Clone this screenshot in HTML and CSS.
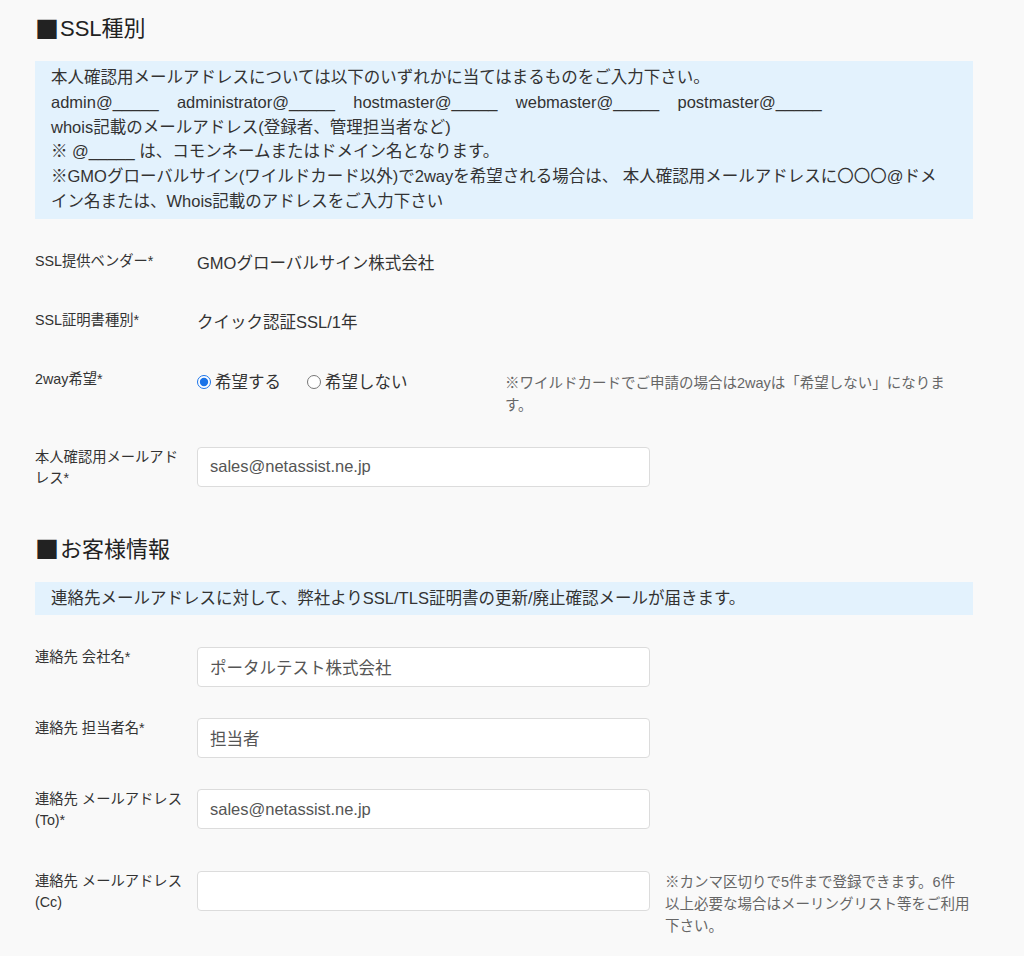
FILE: index.html
```html
<!DOCTYPE html>
<html lang="ja">
<head>
<meta charset="utf-8">
<title>SSL申込</title>
<link rel="stylesheet" href="styles.css">
</head>
<body>
<div class="page">
  <section class="section">
    <h2 class="section-title"><span class="title-mark">■</span>SSL種別</h2>
    <div class="info-box">
      本人確認用メールアドレスについては以下のいずれかに当てはまるものをご入力下さい。<br>
      admin@_____&nbsp;&nbsp;&nbsp;&nbsp;administrator@_____&nbsp;&nbsp;&nbsp;&nbsp;hostmaster@_____&nbsp;&nbsp;&nbsp;&nbsp;webmaster@_____&nbsp;&nbsp;&nbsp;&nbsp;postmaster@_____<br>
      whois記載のメールアドレス(登録者、管理担当者など)<br>
      ※ @_____ は、コモンネームまたはドメイン名となります。<br>
      ※GMOグローバルサイン(ワイルドカード以外)で2wayを希望される場合は、 本人確認用メールアドレスに〇〇〇@ドメイン名または、Whois記載のアドレスをご入力下さい
    </div>

    <div class="field">
      <div class="field-label">SSL提供ベンダー*</div>
      <div class="field-text">GMOグローバルサイン株式会社</div>
    </div>
    <div class="field">
      <div class="field-label">SSL証明書種別*</div>
      <div class="field-text">クイック認証SSL/1年</div>
    </div>
    <div class="field">
      <div class="field-label">2way希望*</div>
      <div class="radio-group">
        <label class="radio"><input type="radio" name="twoway" checked>希望する</label>
        <label class="radio"><input type="radio" name="twoway">希望しない</label>
      </div>
      <div class="field-note note-wide">※ワイルドカードでご申請の場合は2wayは「希望しない」になりま<br>す。</div>
    </div>
    <div class="field">
      <div class="field-label">本人確認用メールアドレス*</div>
      <input class="text-input" type="text" value="sales@netassist.ne.jp">
    </div>
  </section>

  <section class="section">
    <h2 class="section-title"><span class="title-mark">■</span>お客様情報</h2>
    <div class="info-box">連絡先メールアドレスに対して、弊社よりSSL/TLS証明書の更新/廃止確認メールが届きます。</div>

    <div class="field">
      <div class="field-label">連絡先 会社名*</div>
      <input class="text-input" type="text" value="ポータルテスト株式会社">
    </div>
    <div class="field">
      <div class="field-label">連絡先 担当者名*</div>
      <input class="text-input" type="text" value="担当者">
    </div>
    <div class="field field-tall">
      <div class="field-label">連絡先 メールアドレス(To)*</div>
      <input class="text-input" type="text" value="sales@netassist.ne.jp">
    </div>
    <div class="field">
      <div class="field-label">連絡先 メールアドレス(Cc)</div>
      <input class="text-input" type="text" value="">
      <div class="field-note note-narrow">※カンマ区切りで5件まで登録できます。6件<br>以上必要な場合はメーリングリスト等をご利用<br>下さい。</div>
    </div>
  </section>
</div>
</body>
</html>
```

FILE: styles.css
```css
* {
  box-sizing: border-box;
}

html, body {
  margin: 0;
  padding: 0;
  background: #f9f9f9;
}

body {
  font-family: "Liberation Sans", "Noto Sans CJK JP", sans-serif;
  color: #333;
  font-size: 16.5px;
}

.page {
  width: 1024px;
  padding: 16px 51px 0 35px;
}

.section + .section {
  margin-top: 41px;
}

.section-title {
  display: flex;
  align-items: center;
  height: 26px;
  margin: 0 0 19px;
  font-size: 22px;
  font-weight: normal;
  line-height: 26px;
  color: #222;
}

.title-mark {
  font-family: "Noto Sans CJK JP", sans-serif;
  font-size: 24px;
  line-height: 26px;
  margin: 0 1px 3px 0;
}

.info-box {
  background: #e3f2fd;
  padding: 4px 24px 5px 16px;
  line-height: 24.75px;
  font-size: 16.5px;
  color: #333;
  margin-bottom: 32px;
}

.field {
  display: flex;
  align-items: flex-start;
  margin-bottom: 31px;
}

.field-tall {
  margin-bottom: 33px;
}

.field-label {
  flex: 0 0 150px;
  width: 150px;
  margin-right: 12px;
  font-size: 14.3px;
  line-height: 21px;
  padding-bottom: 7px;
  color: #333;
}

.field-text {
  line-height: 24px;
  font-size: 16.5px;
  color: #333;
}

.radio-group {
  flex: 0 0 308px;
  display: flex;
  align-items: center;
  gap: 26px;
  line-height: 24px;
  padding-top: 1px;
}

.radio {
  display: flex;
  align-items: center;
  font-size: 16.5px;
  color: #333;
}

.radio input {
  width: 14px;
  height: 14px;
  margin: 0 4px 0 0;
  accent-color: #1a73e8;
}

.text-input {
  flex: 0 0 453px;
  width: 453px;
  height: 40px;
  border: 1px solid #dcdcdc;
  border-radius: 4px;
  background: #fff;
  padding: 0 12px;
  font-family: "Liberation Sans", "Noto Sans CJK JP", sans-serif;
  font-size: 16.5px;
  color: #555;
  outline: none;
}

.field-note {
  font-size: 14.5px;
  line-height: 22px;
  color: #666;
}

.note-wide {
  width: 470px;
  padding-top: 3px;
}

.note-narrow {
  margin-left: 15px;
  width: 320px;
}
```
